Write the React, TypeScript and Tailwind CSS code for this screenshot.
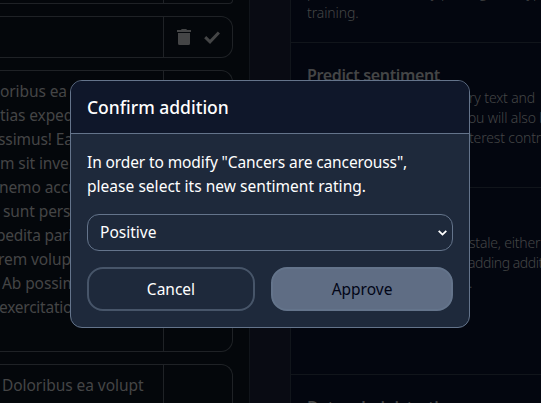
const leftLines: [string, string][] = [
  ["oribus ea", ""],
  ["tias exped", ""],
  ["ssimus! Ea", "-ml-[2px]"],
  ["m sit inve", ""],
  ["nemo accu", "-ml-px"],
  ["sunt pers", "ml-[3px]"],
  ["pedita pari", "-ml-[4px] tracking-[-0.25px]"],
  ["rem volup", "-ml-[2px]"],
  ["Ab possim", "ml-[2px]"],
  ["exercitatio", "-ml-px tracking-[-0.25px]"],
];

function TrashIcon() {
  return (
    <svg className="h-[16px] w-[14px]" viewBox="0 0 14 16" fill="currentColor">
      <path d="M0 1h4l.7-1h4.6l.7 1h4v2H0zM1 4h12v10.500A1.500 1.500 0 0 1 11.500 16h-9A1.500 1.500 0 0 1 1 14.500z" />
    </svg>
  );
}

function CheckIcon() {
  return (
    <svg className="h-[13px] w-[16px]" viewBox="0 0 16 13" fill="none" stroke="currentColor" strokeWidth="3">
      <path d="M1.200 6.200L6 10.800L14.900 1.500" />
    </svg>
  );
}

export default function App() {
  return (
    <div className="relative h-[403px] w-[541px] overflow-hidden bg-[#090b13] font-['Noto_Sans',sans-serif]">
      <div className="flex h-full text-[#444546]">
        <section className="flex w-[250px] shrink-0 flex-col gap-3 overflow-hidden border-r border-[#11151b] bg-[#04070b]">
          <div className="flex h-1 w-[233px] shrink-0 rounded-br-2xl border-r border-b border-[#1f2226]">
            <div className="w-[164px] border-r border-[#1f2226]" />
          </div>
          <div className="flex h-[42px] w-[233px] shrink-0 rounded-r-xl border-y border-r border-[#1f2226]">
            <div className="w-[164px] border-r border-[#1f2226]" />
            <div className="flex flex-1 items-center gap-[13px] pl-[13px]">
              <TrashIcon />
              <CheckIcon />
            </div>
          </div>
          <div className="flex h-[282px] w-[233px] shrink-0 rounded-r-xl border-y border-r border-[#1f2226]">
            <div className="w-[164px] border-r border-[#1f2226] pt-[8px] text-[15.5px] leading-6 tracking-[-0.1px]">
              {leftLines.map(([text, cls]) => (
                <p key={text} className={`whitespace-nowrap ${cls}`}>{text}</p>
              ))}
            </div>
          </div>
          <div className="flex h-[80px] w-[233px] shrink-0 rounded-tr-xl border-t border-r border-[#1f2226]">
            <div className="w-[164px] border-r border-[#1f2226] pt-[8px] pl-[2px] text-[15.5px] leading-6 tracking-[-0.05px]">
              <p>Doloribus ea volupt</p>
            </div>
          </div>
        </section>

        <section className="ml-10 flex w-[251px] shrink-0 flex-col overflow-hidden border-l border-[#11151b] bg-[#03060f] text-[14px] leading-5 font-light">
          <div className="h-[43px] shrink-0 border-b border-[#11151b] pl-4">
            <div className="-mt-[17px] whitespace-nowrap">
              <p>predict sentiment by putting text, typically</p>
              <p className="tracking-[-0.1px]">training.</p>
            </div>
          </div>
          <div className="h-[145px] shrink-0 border-b border-[#11151b] pt-[20px]">
            <h2 className="pl-4 text-[16px] leading-6 font-semibold tracking-[-0.35px]">Predict sentiment</h2>
            <div className="mt-px pl-[178px] tracking-[-0.15px] whitespace-nowrap">
              <p>ry text and</p>
              <p className="-ml-px">ou will also b</p>
              <p>terest contr</p>
            </div>
          </div>
          <div className="h-[187px] shrink-0 border-b border-[#11151b] pt-[45px] pl-[178px] tracking-[-0.2px] whitespace-nowrap">
            <p>stale, either</p>
            <p className="-ml-px tracking-[-0.45px]">adding addit</p>
            <p>.</p>
          </div>
          <div className="pt-[20px] pl-4">
            <h2 className="text-[16px] leading-6 font-semibold tracking-[-0.3px]">Data administration</h2>
          </div>
        </section>
      </div>

      <div className="absolute top-20 left-[70px] flex h-[248px] w-[400px] flex-col overflow-hidden rounded-xl border border-[#64748b] bg-[#1e293b] text-white">
        <header className="flex h-[53px] shrink-0 items-center border-b border-[#64748b] bg-[#0f172a] px-4">
          <h1 className="text-[17.5px] leading-7 font-medium">Confirm addition</h1>
        </header>
        <div className="flex flex-col px-4 pt-4">
          <div className="text-[15.5px] leading-6 whitespace-nowrap">
            <p className="tracking-[-0.11px]">In order to modify "Cancers are cancerouss",</p>
            <p className="tracking-[0.03px]">please select its new sentiment rating.</p>
          </div>
          <div className="mt-4 flex h-[37px] items-center justify-between rounded-xl border border-[#64748b] pr-[5px] pl-3 text-[15.5px]">
            <span>Positive</span>
            <svg className="h-[6px] w-[9px]" viewBox="0 0 9 6" fill="none" stroke="currentColor" strokeWidth="1.800">
              <path d="M.7.8L4.500 4.600L8.300.8" />
            </svg>
          </div>
          <div className="mt-4 flex gap-4 text-[15.5px]">
            <button className="h-11 w-[168px] rounded-2xl border-2 border-[#475569] pt-0.5">Cancel</button>
            <button className="h-11 w-[182px] rounded-2xl border-2 border-[#64748b] bg-[#5f6d84] pt-0.5 text-[#020617]">Approve</button>
          </div>
        </div>
      </div>
    </div>
  );
}
